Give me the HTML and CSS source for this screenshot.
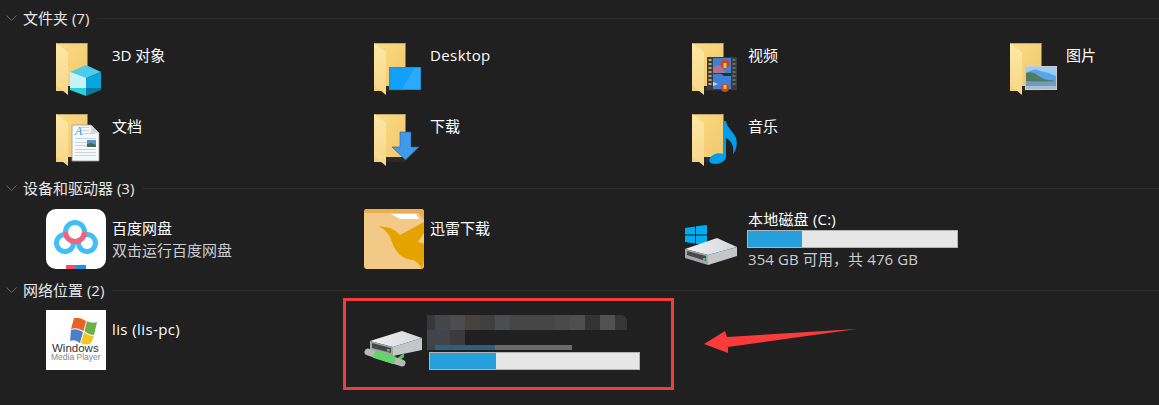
FILE: index.html
```html
<!DOCTYPE html>
<html lang="zh-CN">
<head>
    <meta charset="UTF-8">
    <meta name="viewport" content="width=device-width, initial-scale=1.0">
    <title>此电脑</title>
    <link rel="stylesheet" href="styles.css">
</head>
<body>

<svg class="sprite" xmlns="http://www.w3.org/2000/svg">
    <defs>
        <linearGradient id="folderBack" x1="0" y1="0" x2="1" y2="1">
            <stop offset="0" stop-color="#fcdc84"/>
            <stop offset="1" stop-color="#f0c66c"/>
        </linearGradient>
        <linearGradient id="folderFlap" x1="0" y1="0" x2="0" y2="1">
            <stop offset="0" stop-color="#fee8a6"/>
            <stop offset="1" stop-color="#f7d689"/>
        </linearGradient>
        <linearGradient id="driveTop" x1="0" y1="0" x2="1" y2="0">
            <stop offset="0" stop-color="#f1f2f4"/>
            <stop offset="1" stop-color="#d4d6da"/>
        </linearGradient>
    </defs>
    <symbol id="folder" viewBox="0 0 60 60">
        <path d="M10 3H41.5V47H22V46H21V51H10Z" fill="url(#folderBack)"/>
        <path d="M21 46H41.5V51H21Z" fill="#2c2a25"/>
        <path d="M10 3L22 12V55L10 45Z" fill="url(#folderFlap)"/>
        <path d="M10 3H41.5V3.8H11Z" fill="#a99a70"/>
    </symbol>
</svg>

<!-- FOLDERS -->
<section class="group group-folders">
    <h2 class="group-title">
        <svg class="chevron" viewBox="0 0 11 6"><path d="M0.5 0.5L5.5 5.5L10.5 0.5" fill="none" stroke="#666" stroke-width="1"/></svg>
        <span>文件夹 (7)</span>
        <i class="group-line"></i>
    </h2>
    <div class="items">
        <div class="item">
            <svg class="icon" viewBox="0 0 60 60">
                <use href="#folder"/>
                <path d="M40 25L55 32L40 38L24 32Z" fill="#4ecde8"/>
                <path d="M24 32L40 38V48L24 48Z" fill="#c8f1f5"/>
                <path d="M24 48L40 48V56L24 50Z" fill="#2dcfdc"/>
                <path d="M40 38L55 32V48L40 48Z" fill="#08a5de"/>
                <path d="M40 48H55V50L40 56Z" fill="#07799f"/>
            </svg>
            <div class="label label-folder">3D 对象</div>
        </div>
        <div class="item">
            <svg class="icon" viewBox="0 0 60 60">
                <use href="#folder"/>
                <rect x="25" y="27" width="32" height="23" fill="#1b8fdc"/>
                <rect x="26" y="28" width="30" height="21" fill="#12a0fb"/>
                <path d="M38 49L51 28H56V49Z" fill="#2aabff"/>
            </svg>
            <div class="label label-folder label-wide">Desktop</div>
        </div>
        <div class="item">
            <svg class="icon" viewBox="0 0 60 60">
                <use href="#folder"/>
                <rect x="25" y="17" width="30" height="33" fill="#3a3a3a"/>
                <path d="M26.500 19h3v2h-3zM26.500 23h3v2h-3zM26.500 27h3v2h-3zM26.500 31h3v2h-3zM26.500 35h3v2h-3zM26.500 39h3v2h-3zM26.500 43h3v2h-3z" fill="#b7a77f"/>
                <path d="M50.500 19h3v2h-3zM50.500 23h3v2h-3zM50.500 27h3v2h-3zM50.500 31h3v2h-3zM50.500 35h3v2h-3zM50.500 39h3v2h-3zM50.500 43h3v2h-3z" fill="#6a6a6a"/>
                <rect x="31" y="18" width="18" height="15" fill="#3f7fd6"/>
                <rect x="31" y="34" width="18" height="15" fill="#3f7fd6"/>
                <path d="M31 27l6-2 4 3 2 5H31Z" fill="#b46f8e"/>
                <circle cx="43" cy="24" r="4.500" fill="#c8442a"/>
                <rect x="41.500" y="23" width="3" height="5" fill="#e8c030"/>
                <path d="M38 33H49V36H42Z" fill="#1e3a1e"/>
                <path d="M31 42l5 2-5 2Z" fill="#d7d7c0"/>
                <circle cx="43" cy="48" r="4" fill="#c8442a"/>
                <rect x="41.500" y="45" width="3" height="4" fill="#e8c030"/>
            </svg>
            <div class="label label-folder">视频</div>
        </div>
        <div class="item">
            <svg class="icon" viewBox="0 0 60 60">
                <use href="#folder"/>
                <rect x="25" y="26" width="32" height="24" fill="#c8ccd0"/>
                <rect x="26" y="27" width="30" height="22" fill="#5aa5ea"/>
                <path d="M30 31q6-3 10 0 8 1 16 5v-9H26v6Z" fill="#9bcdf5"/>
                <path d="M26 33q6-2 10 1 6 5 12 6 4 0 8 1v8H26Z" fill="#4e7d62"/>
                <path d="M26 41q12 1 30 0V49H26Z" fill="#6f9cc0"/>
                <path d="M26 46H56V49H26Z" fill="#a9bfd0"/>
            </svg>
            <div class="label label-folder">图片</div>
        </div>
        <div class="item">
            <svg class="icon" viewBox="0 0 60 60">
                <use href="#folder"/>
                <path d="M26 14H45L53 22V50H26Z" fill="#f7f8fa" stroke="#9a9a9a" stroke-width="0.800"/>
                <path d="M45 14V22H53Z" fill="#d5d7da"/>
                <text class="doc-letter" x="29" y="24">A</text>
                <path d="M35 16h8v1h-8zM35 19h8v1h-8zM35 22h14v1H35zM29 27h21v1H29zM29 31h13v1H29zM29 34h13v1H29zM29 38h21v1H29zM29 41h21v1H29zM29 44h21v1H29z" fill="#c3d6e6"/>
                <rect x="41" y="29" width="9" height="7" fill="#5e94b8"/>
                <path d="M41 33l4-1 5 2v2h-9Z" fill="#3f6a55"/>
            </svg>
            <div class="label label-folder">文档</div>
        </div>
        <div class="item">
            <svg class="icon" viewBox="0 0 60 60">
                <use href="#folder"/>
                <path d="M36 21H47V36H55L41.500 49L28 36H36Z" fill="#3f9bea" stroke="#2c5a86" stroke-width="0.600"/>
            </svg>
            <div class="label label-folder">下载</div>
        </div>
        <div class="item">
            <svg class="icon" viewBox="0 0 60 60">
                <use href="#folder"/>
                <path d="M41 10H44C45 17 51 20 54 27C56 33 54 39 51 43C52 37 51 31 44 27V46C44 50 38 53 33 53C28 53 26 50 28 47C30 43 37 41 41 43Z" fill="#009fee"/>
            </svg>
            <div class="label label-folder">音乐</div>
        </div>
    </div>
</section>

<!-- DEVICES -->
<section class="group group-devices">
    <h2 class="group-title">
        <svg class="chevron" viewBox="0 0 11 6"><path d="M0.5 0.5L5.5 5.5L10.5 0.5" fill="none" stroke="#666" stroke-width="1"/></svg>
        <span>设备和驱动器 (3)</span>
        <i class="group-line"></i>
    </h2>
    <div class="items">
        <div class="item">
            <svg class="icon" viewBox="0 0 60 60">
                <rect width="60" height="60" rx="10" fill="#fff"/>
                <circle cx="19" cy="34" r="8.500" fill="none" stroke="#41bff5" stroke-width="5"/>
                <circle cx="41" cy="34" r="8.500" fill="none" stroke="#41bff5" stroke-width="5"/>
                <circle cx="29" cy="23" r="11" fill="#fff"/>
                <circle cx="29" cy="23" r="9.500" fill="none" stroke="#41bff5" stroke-width="5"/>
                <path d="M19.500 23A9.500 9.500 0 0 0 38.500 23" fill="none" stroke="#f6627c" stroke-width="5"/>
                <rect x="20" y="56" width="10" height="4" fill="#f0506e"/>
                <rect x="30" y="56" width="10" height="4" fill="#2090f0"/>
            </svg>
            <div class="label label-device">
                <div>百度网盘</div>
                <div class="sub">双击运行百度网盘</div>
            </div>
        </div>
        <div class="item">
            <svg class="icon" viewBox="0 0 60 60">
                <rect width="60" height="60" rx="3" fill="#f2c987"/>
                <path d="M0 3Q0 0 3 0H57Q60 0 60 3V11L54 4H0Z" fill="#e9ae50"/>
                <path d="M27 5H52L55 10H36Z" fill="#fff"/>
                <path d="M14 17L26 19Q31 21 36 26L60 13V24L54 33L60 34.500V52L58 60Q54 53 49 51Q40 50 36 46Q30 40 27.500 32Q25 22 14 17Z" fill="#e5a300"/>
            </svg>
            <div class="label label-device">迅雷下载</div>
        </div>
        <div class="item">
            <svg class="icon" viewBox="0 0 60 60">
                <path d="M3 19L13 17.500V25.500H3ZM14 17.300L25 16V25.500H14ZM3 26.500H13V34.500L3 33ZM14 26.500H25V36L14 34.700Z" fill="#00adef"/>
                <path d="M3 40L35 29L55 38L26 46Z" fill="url(#driveTop)"/>
                <path d="M3 40L26 46V56L3 49Z" fill="#a4a6a9"/>
                <path d="M26 46L55 38V47L26 56Z" fill="#c4c6c9"/>
                <path d="M5 42L24 47V52L5 46Z" fill="#47484a"/>
                <rect x="21" y="49" width="2.500" height="2.500" fill="#3fd45e"/>
            </svg>
            <div class="label label-disk">
                <div class="disk-name">本地磁盘 (C:)</div>
                <div class="bar"><div class="bar-fill bar-fill-c"></div></div>
                <div class="sub disk-free">354 GB 可用，共 476 GB</div>
            </div>
        </div>
    </div>
</section>

<!-- NETWORK -->
<section class="group group-network">
    <h2 class="group-title">
        <svg class="chevron" viewBox="0 0 11 6"><path d="M0.5 0.5L5.5 5.5L10.5 0.5" fill="none" stroke="#666" stroke-width="1"/></svg>
        <span>网络位置 (2)</span>
        <i class="group-line"></i>
    </h2>
    <div class="items">
        <div class="item">
            <svg class="icon" viewBox="0 0 60 60">
                <rect width="60" height="60" fill="#fff"/>
                <path d="M28 8Q34 7 40 11L37.500 21Q31 17 25 19Z" fill="#e8622c"/>
                <path d="M41 11Q46 14 51 12L48 25Q43 25 38.500 21Z" fill="#6fae45"/>
                <path d="M25 20Q31 18 37 22L34 33Q29 29 24 31Z" fill="#4a80c8"/>
                <path d="M38 22Q43 26 48 26L45 33Q40 36 35 33Z" fill="#f3c623"/>
                <text class="wmp-main" x="6" y="42">Windows</text>
                <text class="wmp-sub" x="5" y="50">Media Player</text>
            </svg>
            <div class="label label-device label-wide">lis (lis-pc)</div>
        </div>
        <div class="item">
            <svg class="icon" viewBox="0 0 60 60">
                <path d="M6 31L38 21L58 28L29 37Z" fill="url(#driveTop)"/>
                <path d="M6 31L29 37V46L6 40Z" fill="#a4a6a9"/>
                <path d="M29 37L58 28V40L29 46Z" fill="#c4c6c9"/>
                <path d="M8 33L27 38V43L8 38Z" fill="#47484a"/>
                <rect x="23" y="39" width="2.500" height="2.500" fill="#3fd45e"/>
                <path d="M32 49L40 43V47L34 52Z" fill="#4fc65c"/>
                <path d="M4 42L38 53" stroke="#b9bab8" stroke-width="7" stroke-linecap="round"/>
                <path d="M10 44L31 50.500" stroke="#63d36c" stroke-width="8"/>
            </svg>
            <div class="label label-net">
                <div class="mosaic">
                    <div class="mosaic-top"></div>
                    <div class="mosaic-bottom"></div>
                    <div class="mosaic-strip"></div>
                </div>
                <div class="bar"><div class="bar-fill bar-fill-net"></div></div>
            </div>
        </div>
    </div>
</section>

<!-- RED MARKUP ON TOP OF THE SCREENSHOT -->
<div class="markup-box"></div>
<svg class="markup-arrow" viewBox="0 0 155 26"><path d="M0 15L21 2L23 8L153 0L24 18L24 24Z" fill="#f93b3b"/></svg>

</body>
</html>
```

FILE: styles.css
```css
* {
    box-sizing: border-box;
}
body {
    margin: 0;
    height: 405px;
    overflow: hidden;
    position: relative;
    background-color: #202020;
    color: #fff;
    font-family: "Open Sans", "Noto Sans CJK SC", sans-serif;
    font-size: 15px;
    line-height: 20px;
}
.sprite {
    display: block;
    width: 0;
    height: 0;
}
.group-folders {
    padding-top: 8px;
    margin-bottom: 7px;
}
.group-devices {
    margin-bottom: 11px;
}
.group-title {
    display: flex;
    align-items: center;
    height: 20px;
    margin: 0 0 11px;
    padding-left: 6px;
    font-size: 15px;
    font-weight: normal;
    color: #e8e8e8;
}
.group-folders .group-title {
    margin-bottom: 12px;
}
.group-network .group-title {
    margin-bottom: 10px;
}
.chevron {
    width: 11px;
    height: 6px;
    margin-right: 6px;
}
.group-line {
    flex: 1;
    height: 1px;
    margin-left: 8px;
    background: #2c2c2c;
}
.items {
    display: grid;
    grid-template-columns: repeat(3, 318px) 1fr;
    row-gap: 11px;
    padding-left: 46px;
}
.item {
    display: flex;
    gap: 5px;
}
.icon {
    display: block;
    flex: none;
    width: 60px;
    height: 60px;
}
.label-folder {
    padding: 5px 0 0 1px;
}
.label-device {
    padding: 8px 0 0 1px;
    line-height: 22px;
}
.label-wide {
    letter-spacing: 0.4px;
}
.disk-name {
    padding-left: 1px;
    letter-spacing: 0.2px;
}
.disk-free {
    padding-left: 1px;
    letter-spacing: 0.1px;
}
.sub {
    color: #c9cdd0;
}
.bar {
    width: 211px;
    height: 18px;
    margin: 1px 0;
    background: #e6e6e6;
    border: 1px solid #b4b4b4;
}
.bar-fill {
    height: 100%;
    background: #26a0da;
}
.bar-fill-c {
    width: 26%;
}
.bar-fill-net {
    width: 31.5%;
}
.label-net {
    padding-top: 5px;
}
/* the blurred out drive name */
.mosaic {
    display: flex;
    flex-direction: column;
    width: 200px;
    height: 36px;
    margin-left: -2px;
}
.mosaic-top {
    flex: none;
    height: 15px;
    border-top-right-radius: 6px;
    background: linear-gradient(90deg, #37383a 0 8px, #454649 8px 23px, #4d4d4f 23px 38px, #47423f 38px 53px, #3f3f3f 53px 68px, #4c4d50 68px 83px, #464646 83px 128px, #4a4a4a 128px 143px, #4f4f4f 143px 158px, #333 158px 173px, #505252 173px 188px, #363636 188px);
}
.mosaic-bottom {
    flex: none;
    width: 38px;
    height: 15px;
    background: linear-gradient(90deg, #42444a 0 23px, #3d3b3a 23px);
}
.mosaic-strip {
    flex: none;
    width: 145px;
    height: 5px;
    background: linear-gradient(90deg, #3f4346 0 8px, #2f5f80 8px 68px, #6b6b6b 68px);
}
.doc-letter {
    font-family: "Liberation Serif", serif;
    font-size: 12px;
    font-style: italic;
    fill: #2f8fe0;
}
.wmp-main {
    font-family: "Liberation Sans", sans-serif;
    font-size: 11.5px;
    fill: #333;
}
.wmp-sub {
    font-family: "Liberation Sans", sans-serif;
    font-size: 8.5px;
    fill: #888;
}
.markup-box {
    position: absolute;
    left: 343px;
    top: 298px;
    width: 331px;
    height: 92px;
    border: 3px solid #f33d3d;
}
.markup-arrow {
    position: absolute;
    left: 704px;
    top: 329px;
    width: 155px;
    height: 26px;
}
```
